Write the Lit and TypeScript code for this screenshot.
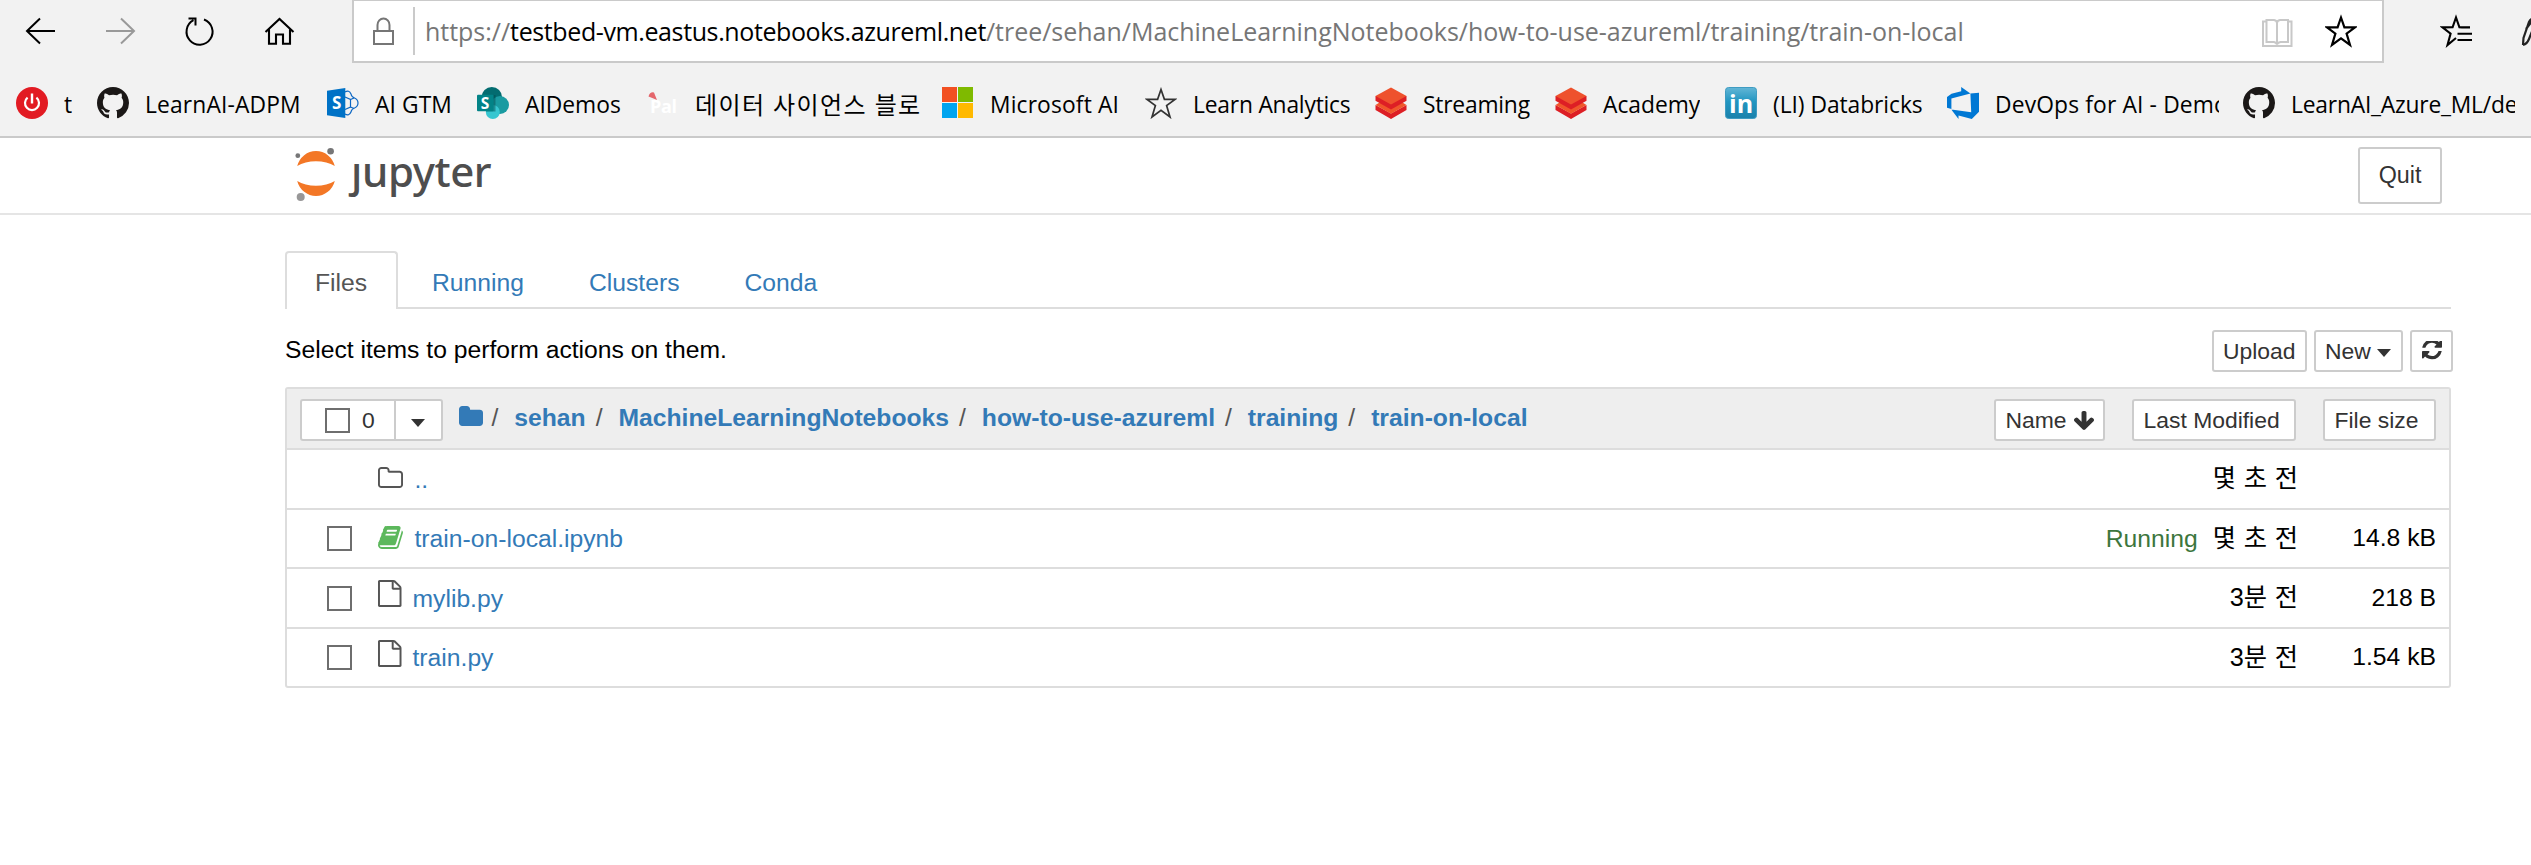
import { LitElement, html, css, svg, TemplateResult, nothing } from "lit";
import { customElement } from "lit/decorators.js";

const FA = {
  refresh: "M1511 928q0 5-1 7-64 268-268 434.5t-478 166.5q-146 0-282.5-55t-243.5-157l-129 129q-19 19-45 19t-45-19-19-45v-448q0-26 19-45t45-19h448q26 0 45 19t19 45-19 45l-137 137q71 66 161 102t187 36q134 0 250-65t186-179q11-17 53-117 8-23 30-23h192q13 0 22.5 9.5t9.5 22.5zm25-800v448q0 26-19 45t-45 19h-448q-26 0-45-19t-19-45 19-45l138-138q-148-137-349-137-134 0-250 65t-186 179q-11 17-53 117-8 23-30 23h-199q-13 0-22.5-9.5t-9.5-22.5v-7q65-268 270-434.5t480-166.5q146 0 284 55.5t245 156.5l130-129q19-19 45-19t45 19 19 45z",
  arrowDown: "M1675 832q0 53-37 90l-651 652q-39 37-91 37-53 0-90-37l-651-652q-38-36-38-90 0-53 38-91l74-75q39-37 91-37 53 0 90 37l294 294v-704q0-52 38-90t90-38h128q52 0 90 38t38 90v704l294-294q37-37 90-37 52 0 91 37l75 75q37 39 37 91z",
  folder: "M1728 608v704q0 92-66 158t-158 66h-1216q-92 0-158-66t-66-158v-960q0-92 66-158t158-66h320q92 0 158 66t66 158v32h672q92 0 158 66t66 158z",
  folderO: "M1600 1312v-704q0-40-28-68t-68-28h-704q-40 0-68-28t-28-68v-64q0-40-28-68t-68-28h-320q-40 0-68 28t-28 68v960q0 40 28 68t68 28h1216q40 0 68-28t28-68zm128-704v704q0 92-66 158t-158 66h-1216q-92 0-158-66t-66-158v-960q0-92 66-158t158-66h320q92 0 158 66t66 158v32h672q92 0 158 66t66 158z",
  fileO: "M1596 380q28 28 48 76t20 88v1152q0 40-28 68t-68 28h-1344q-40 0-68-28t-28-68v-1600q0-40 28-68t68-28h896q40 0 88 20t76 48zm-444-244v376h376q-10-29-22-41l-313-313q-12-12-41-22zm384 1528v-1024h-416q-40 0-68-28t-28-68v-416h-768v1536h1280z",
  book: "M1703 478q40 57 18 129l-275 906q-19 64-76.5 107.5t-122.5 43.5h-923q-77 0-148.5-53.5t-99.5-131.5q-24-67-2-127 0-4 3-27t4-37q1-8-3-21.5t-3-19.5q2-11 8-21t16.5-23.5 16.5-23.5q23-38 45-91.5t30-91.5q3-10 .5-30t-.5-28q3-11 17-28t17-23q21-36 42-92t25-90q1-9-2.5-32t.5-28q4-13 22-30.5t22-22.5q19-26 42.5-84.5t27.5-96.5q1-8-3-25.5t-2-26.5q2-8 9-18t18-23 17-21q8-12 16.5-30.5t15-35 16-36 19.5-32 26.5-23.5 36-11.5 47.5 5.5l-1 3q38-9 51-9h761q74 0 114 56t18 130l-274 906q-36 119-71.5 153.5t-128.5 34.5h-869q-27 0-38 15-11 16-1 43 24 70 144 70h923q29 0 56-15.5t35-41.5l300-987q7-22 5-57 38 15 59 43zm-1064 2q-4 13 2 22.5t20 9.5h608q13 0 25.5-9.5t16.5-22.5l21-64q4-13-2-22.5t-20-9.5h-608q-13 0-25.5 9.5t-16.5 22.5zm-83 256q-4 13 2 22.5t20 9.5h608q13 0 25.5-9.5t16.5-22.5l21-64q4-13-2-22.5t-20-9.5h-608q-13 0-25.5 9.5t-16.5 22.5z",
};

const fa = (d: string, box: string, w: number, h: number) =>
  html`<svg class="fa" width=${w} height=${h} viewBox=${box} preserveAspectRatio="none"><path d=${d} /></svg>`;

const glyph = (w: number, h: number, body: TemplateResult | ReturnType<typeof svg>) =>
  html`<svg class="glyph" width=${w} height=${h} viewBox="0 0 ${w} ${h}">${body}</svg>`;

const STAR = "M16 2.5 L19.4 12.3 L30 12.4 L21.6 18.6 L25 30 L16 23.4 L7 30 L10.4 18.6 L2 12.4 L12.6 12.3 Z";

const github = svg`<path transform="scale(2)" fill="#1b1817" d="M8 0C3.58 0 0 3.58 0 8c0 3.54 2.29 6.53 5.47 7.59.4.07.55-.17.55-.38 0-.19-.01-.82-.01-1.49-2.01.37-2.53-.49-2.69-.94-.09-.23-.48-.94-.82-1.13-.28-.15-.68-.52-.01-.53.63-.01 1.08.58 1.23.82.72 1.21 1.87.87 2.33.66.07-.52.28-.87.51-1.07-1.78-.2-3.64-.89-3.64-3.95 0-.87.31-1.59.82-2.15-.08-.2-.36-1.02.08-2.12 0 0 .67-.21 2.2.82.64-.18 1.32-.27 2-.27.68 0 1.36.09 2 .27 1.53-1.04 2.2-.82 2.2-.82.44 1.1.16 1.92.08 2.12.51.56.82 1.27.82 2.15 0 3.07-1.87 3.75-3.65 3.95.29.25.54.73.54 1.48 0 1.07-.01 1.93-.01 2.2 0 .21.15.46.55.38A8.013 8.013 0 0016 8c0-4.42-3.58-8-8-8z"/>`;

const power = svg`<circle cx="16" cy="16" r="16" fill="#e21b23"/>
  <path d="M11.6 10.6 A7 7 0 1 0 20.4 10.6" fill="none" stroke="#fff" stroke-width="2.2"/>
  <path d="M16 6.5 V16.5" stroke="#fff" stroke-width="2.4"/>`;

const sharepointOld = svg`<g fill="none" stroke="#0b66c3" stroke-width="1.2">
  <path d="M18 10 L23.5 12.5 V20 L18 22.5"/><path d="M23.5 12.5 L27 11 M23.5 20 L27 21.5"/>
  <path d="M18 5 Q22 2.5 24 7 Q24.5 10 27.5 11 Q31 12.5 31 16 Q31 19.5 27.5 21 Q24.5 22 24 25 Q22 29.5 18 27"/></g>
  <path d="M0 3.7 L18.3 1 V31 L0 28.3 Z" fill="#0072c6"/>
  <text class="mark" x="5" y="22" font-size="17" fill="#fff">S</text>`;

const sharepointNew = svg`<circle cx="14.8" cy="10.3" r="10.3" fill="#036c70"/>
  <circle cx="23" cy="18" r="9" fill="#1a9ba1"/><circle cx="15.8" cy="25" r="7" fill="#37c6d0"/>
  <path d="M8 8 H18.5 V24.5 H9 Z" fill="#03484b" opacity=".45"/>
  <rect x="0" y="7.7" width="16.6" height="16.6" rx="1" fill="#038387"/>
  <text class="mark" x="3.8" y="21.6" font-size="15.5" fill="#fff">S</text>`;

const pal = svg`<text class="mark" x="4" y="25.5" font-size="18" textLength="27" fill="#fff">Pal</text>
  <path d="M2.5 9.5 Q4 4.5 8 5.5 L11 13 Q7 11 2.5 9.5 Z" fill="#e4666c"/>`;

const windows = svg`<path fill="#f25022" d="M0 0h15v15H0z"/><path fill="#7fba00" d="M16 0h15v15H16z"/>
  <path fill="#00a4ef" d="M0 16h15v15H0z"/><path fill="#ffb900" d="M16 16h15v15H16z"/>`;

const star = svg`<path d=${STAR} fill="none" stroke="#333" stroke-width="1.7"/>`;

const databricks = svg`<path d="M.5 18 L16 26.5 L31.5 18 V23 L16 32 L.5 23 Z" fill="#dd1f25"/>
  <path d="M.5 18 L5 15.3 L16 21.5 L27 15.3 L31.5 18 L16 26.8 Z" fill="#f0562b"/>
  <path d="M.5 9 V13.8 L16 22.4 L31.5 13.8 V9 Z" fill="#dd1f25"/>
  <path d="M16 .5 L31.5 9 L16 17.6 L.5 9 Z" fill="#ee522d"/>`;

const linkedin = svg`<defs><linearGradient id="li" x1="0" y1="0" x2="0" y2="1"><stop offset="0" stop-color="#63b6d6"/><stop offset=".45" stop-color="#2296c1"/><stop offset="1" stop-color="#1b81ab"/></linearGradient></defs>
  <rect x=".5" y=".5" width="31" height="31" rx="3" fill="url(#li)" stroke="#3f9cc2"/>
  <text class="mark" x="4" y="26" font-size="25" fill="#fff">in</text>`;

const devops = svg`<path fill="#0078d4" fill-rule="evenodd" d="M0 10 L4.5 6.7 L14.2 4.2 V0 L23.4 6.6 L32 5.8 V24.7 L24.8 32 L11.5 28.4 V32 L5 23.6 L4.4 22 L0 20.8 Z M4.4 11.4 V22.6 L24.2 25.3 L23.4 6.6 Z"/>`;

interface Mark { icon: unknown; label: string; spacing: number }
const MARKS: Mark[] = [
  { icon: power, label: "t", spacing: 0 },
  { icon: github, label: "LearnAI-ADPM", spacing: 0.15 },
  { icon: sharepointOld, label: "AI GTM", spacing: 0.1 },
  { icon: sharepointNew, label: "AIDemos", spacing: 0 },
  { icon: pal, label: "데이터 사이언스 블로", spacing: 1.4 },
  { icon: windows, label: "Microsoft AI", spacing: 0.15 },
  { icon: star, label: "Learn Analytics", spacing: -0.2 },
  { icon: databricks, label: "Streaming", spacing: -0.2 },
  { icon: databricks, label: "Academy", spacing: 0 },
  { icon: linkedin, label: "(LI) Databricks", spacing: -0.05 },
  { icon: devops, label: "DevOps for AI - Demo", spacing: 0.15 },
  { icon: github, label: "LearnAI_Azure_ML/de", spacing: -0.2 },
];

interface Row { kind: "up" | "notebook" | "file"; name: string; when: string; size: string; running?: boolean }
const ROWS: Row[] = [
  { kind: "up", name: "..", when: "몇 초 전", size: "" },
  { kind: "notebook", name: "train-on-local.ipynb", when: "몇 초 전", size: "14.8 kB", running: true },
  { kind: "file", name: "mylib.py", when: "3분 전", size: "218 B" },
  { kind: "file", name: "train.py", when: "3분 전", size: "1.54 kB" },
];

@customElement("app-root")
class AppRoot extends LitElement {
  static styles = css`
    :host { display: block; width: 2531px; height: 865px; overflow: hidden; background: #fff; color: #000;
      font: 24.7px/30px "Liberation Sans", "Noto Sans CJK KR", sans-serif; }
    * { box-sizing: border-box; }
    svg { display: block; flex: none; }
    .fa { fill: currentColor; }
    .mark { font-family: "Open Sans", sans-serif; font-weight: 700; }
    .chrome { height: 138px; background: #f2f2f2; border-bottom: 2px solid #cacaca;
      font-family: "Open Sans", "Noto Sans CJK KR", sans-serif; overflow: hidden; }
    .bar { display: flex; height: 63px; }
    .nav { flex: none; width: 352px; display: flex; padding: 15px 0 0 25px; gap: 48.7px; }
    .address { flex: none; width: 2032px; height: 63px; border: 2px solid #cacaca; border-top-width: 1px; background: #fff;
      display: flex; align-items: flex-start; padding-left: 18px; }
    .lock { flex: none; margin: 15px 19px 0 0; }
    .sep { flex: none; width: 2px; height: 48px; background: #cacaca; margin: 6px 10px 0 0; }
    .url { flex: none; display: flex; width: 1836px; font-size: 25px; line-height: 34px; padding-top: 13px; color: #767676;
      white-space: nowrap; letter-spacing: -0.02px; }
    .host { color: #000; letter-spacing: -0.39px; }
    .reader { margin: 15px 32px 0 0; }
    .fav { margin-top: 13px; }
    .tools { display: flex; padding: 14px 0 0 56px; gap: 48px; overflow: hidden; }
    .marks { display: grid; height: 73px; padding: 24px 0 0 16px;
      grid-template-columns: 81px 230px 150px 169px 296px 203px 230px 180px 170px 222px 296px 288px; }
    .bm { display: flex; height: 32px; }
    .bm span { margin-left: 16px; font-size: 22.8px; line-height: 36px; white-space: pre; overflow: hidden; height: 38px; }
    .bm:nth-child(5) span { font-size: 24px; margin-left: 17px; }
    .bm:nth-child(11) span { width: 224px; }
    .bm:nth-child(12) span { width: 224px; }
    .header { height: 77px; display: flex; justify-content: space-between; border-bottom: 2px solid #e5e5e5; padding: 9px 89px 0 295px; }
    .brand { display: flex; color: #4e4e4e; }
    .word { font: 500 42px/56px "Noto Sans", sans-serif; letter-spacing: -0.4px; margin: -4.5px 0 0 15px; white-space: nowrap; }
    .j { display: inline-block; clip-path: inset(19px -8px -4px -8px); }
    button { font: 22.9px/26px "Liberation Sans", sans-serif; color: #333; background: #fff; border: 2px solid #ccc;
      border-radius: 3px; margin: 0; padding: 0 10px; height: 42px; display: flex; align-items: center; white-space: nowrap; }
    .quit { width: 84px; height: 57px; justify-content: center; font-size: 23.3px; padding-bottom: 1px; }
    main { margin: 36px 0 0 285px; width: 2166px; }
    .tabs { display: flex; height: 58px; border-bottom: 2px solid #ddd; color: #337ab7; }
    .tab { height: 58px; padding: 17px 31px 0 34px; }
    .tab.on { width: 113px; border: 2px solid #ddd; border-bottom: 0; border-radius: 4px 4px 0 0; background: #fff; color: #555; padding: 15px 0 0 28px; }
    .actions { display: flex; justify-content: space-between; height: 78px; padding-top: 21px; }
    .hint { padding-top: 4.5px; }
    .btns { display: flex; margin-right: -2px; gap: 7px; }
    .upload { width: 95px; padding: 0 9px; }
    .new { width: 89px; padding: 0 9px; }
    .refresh { padding: 0 9.5px; width: 43px; }
    .caret { flex: none; border: 7.5px solid transparent; border-top: 8px solid #333; border-bottom: 0; margin: 3px 0 0 6px; }
    .list { border: 2px solid #ddd; border-radius: 3px; }
    .head { height: 61px; background: #eee; border-bottom: 2px solid #ddd; display: flex; padding: 10px 13px 0 13px; }
    .select { display: flex; width: 143px; background: #fff; border: 2px solid #ccc; border-radius: 3px; height: 42px; color: #333; }
    .count { flex: none; width: 94px; display: flex; align-items: center; font-size: 22.9px; border-right: 2px solid #ccc; padding-left: 23px; gap: 12px; }
    .box { width: 25px; height: 25px; border: 2px solid #6e6e6e; background: #fff; }
    .drop { margin: 17.5px 0 0 14.5px; }
    .crumbs { flex: 1; display: flex; align-items: flex-start; padding: 4px 0 0 16px; font-weight: 700; color: #337ab7; }
    .crumbs .fa { margin: 2.5px 8.5px 0 0; }
    .slash { font-weight: 400; color: #555; width: 22.8px; }
    .crumb { margin-right: 10px; white-space: nowrap; }
    .sorts { display: flex; gap: 27px; }
    .sorts button { padding-left: 9.5px; }
    .name { width: 111px; } .modified { width: 164px; } .size { width: 113px; }
    .name .fa { margin-left: 7px; }
    .row { display: flex; align-items: center; height: 59px; border-top: 2px solid #ddd; padding-right: 13px; }
    .row:nth-child(2) { border-top: 0; height: 58px; }
    .row:nth-child(4) { height: 60px; }
    .cell { width: 91px; padding-left: 40px; }
    .link { display: flex; align-items: center; flex: 1; color: #337ab7; height: 57px; padding-top: 1px; }
    .file-ic { width: 36.5px; color: #555; }
    .file-ic.book { color: #5cb85c; padding-bottom: 4px; }
    .file-ic.page { width: 34.5px; padding-bottom: 10px; }
    .file-ic.up { padding-bottom: 4px; }
    .run { color: #3c763d; margin-right: 15px; }
    .when { font-size: 25.3px; word-spacing: .7px; white-space: nowrap; padding-bottom: 1.5px; }
    .bytes { width: 138px; text-align: right; white-space: nowrap; padding-bottom: 1px; }
  `;

  private fileIcon(kind: Row["kind"]) {
    if (kind === "up") return html`<div class="file-ic up">${fa(FA.folderO, "64 128 1664 1408", 25, 21)}</div>`;
    if (kind === "notebook") return html`<div class="file-ic book">${fa(FA.book, "62 128 1670 1537", 25, 23)}</div>`;
    return html`<div class="file-ic page">${fa(FA.fileO, "128 0 1536 1792", 23.5, 27)}</div>`;
  }

  render() {
    const crumbs = ["sehan", "MachineLearningNotebooks", "how-to-use-azureml", "training", "train-on-local"];
    return html`
      <div class="chrome">
        <div class="bar">
          <div class="nav">
            ${glyph(31, 32, svg`<path d="M15 3.5 L2 16 L15 28.5 M2 16 H30" fill="none" stroke="#000" stroke-width="2"/>`)}
            ${glyph(31, 32, svg`<path d="M16 3.5 L29 16 L16 28.5 M29 16 H1" fill="none" stroke="#999" stroke-width="2"/>`)}
            ${glyph(31, 32, svg`<path d="M20 4.5 A13 13 0 1 1 9.5 5.2 M4.5 3.5 H11.5 V10.5" fill="none" stroke="#000" stroke-width="2"/>`)}
            ${glyph(31, 32, svg`<path d="M1.5 17 L15.5 4 L29.5 17 M5 14.5 V28.8 H12 V19.5 H19 V28.8 H26 V14.5" fill="none" stroke="#000" stroke-width="2.1"/>`)}
          </div>
          <div class="address">
            <div class="lock">${glyph(22, 30, svg`<path d="M2 15 H21 V28 H2 Z M5.5 15 V9 A6 6.5 0 0 1 17.5 9 V15" fill="none" stroke="#767676" stroke-width="2"/>`)}</div>
            <div class="sep"></div>
            <div class="url"><span>https://</span><span class="host">testbed-vm.eastus.notebooks.azureml.net</span><span>/tree/sehan/MachineLearningNotebooks/how-to-use-azureml/training/train-on-local</span></div>
            <div class="reader">${glyph(32, 32, svg`<path d="M5.5 5.5 H2 V30 H30.5 V5.5 H27 M5.5 4 H13 Q16 4.5 16 7 Q16 4.5 19 4 H27 V26 H19.5 Q16.5 26.5 16 28.5 Q15.5 26.5 13 26 H5.5 Z M16 7 V27" fill="none" stroke="#c8c8c8" stroke-width="2"/>`)}</div>
            <div class="fav">${glyph(32, 34, svg`<path d=${STAR} transform="translate(0 1)" fill="none" stroke="#000" stroke-width="2.2"/>`)}</div>
          </div>
          <div class="tools">
            ${glyph(33, 34, svg`<path d="M22 13.4 L19.4 13.3 L16 3.5 L12.6 13.3 L2.5 13.4 L10.6 19.6 L7.5 31 L16 24 M19 13.4 H30 M17.5 19.8 H32 M17.5 26 H32" fill="none" stroke="#000" stroke-width="2.1"/>`)}
            ${glyph(32, 34, svg`<path d="M2 31 L2.5 24 L8 8 Q9.5 4.5 14 4 M2 31 Q6 30 8 25 L14 10 M5 15 L11 7" fill="none" stroke="#222" stroke-width="2.2"/>`)}
          </div>
        </div>
        <div class="marks">
          ${MARKS.map((m) => html`<div class="bm">${glyph(32, 32, m.icon as any)}<span style="letter-spacing:${m.spacing}px">${m.label}</span></div>`)}
        </div>
      </div>
      <div class="header">
        <div class="brand">
          ${glyph(41, 56, svg`<path d="M2.2 19 A19.5 20.5 0 0 1 39.8 19 A26 15 0 0 0 2.2 19 Z M2.2 34 A19.5 20.5 0 0 0 39.8 34 A26 15 0 0 1 2.2 34 Z" fill="#f37726"/>
            <circle cx="2.8" cy="8.7" r="2.4" fill="#767677"/><circle cx="35.6" cy="4.3" r="3.3" fill="#767677"/><circle cx="5.7" cy="50" r="4" fill="#989798"/>`)}
          <div class="word"><span class="j">j</span>upyter</div>
        </div>
        <button class="quit">Quit</button>
      </div>
      <main>
        <div class="tabs">
          <div class="tab on">Files</div><div class="tab">Running</div><div class="tab">Clusters</div><div class="tab">Conda</div>
        </div>
        <div class="actions">
          <div class="hint">Select items to perform actions on them.</div>
          <div class="btns">
            <button class="upload">Upload</button>
            <button class="new">New<span class="caret"></span></button>
            <button class="refresh">${fa(FA.refresh, "0 128 1536 1536", 20, 20)}</button>
          </div>
        </div>
        <div class="list">
          <div class="head">
            <div class="select"><div class="count"><span class="box"></span>0</div><span class="caret drop"></span></div>
            <div class="crumbs">${fa(FA.folder, "64 128 1664 1408", 24, 20)}${crumbs.map((c) => html`<span class="slash">/</span><span class="crumb">${c}</span>`)}</div>
            <div class="sorts">
              <button class="name">Name${fa(FA.arrowDown, "117 128 1558 1483", 20, 19)}</button>
              <button class="modified">Last Modified</button>
              <button class="size">File size</button>
            </div>
          </div>
          ${ROWS.map((r) => html`<div class="row">
            <div class="cell">${r.kind === "up" ? nothing : html`<div class="box"></div>`}</div>
            <div class="link">${this.fileIcon(r.kind)}<span>${r.name}</span></div>
            ${r.running ? html`<span class="run">Running</span>` : nothing}
            <span class="when">${r.when}</span><span class="bytes">${r.size}</span>
          </div>`)}
        </div>
      </main>`;
  }
}
